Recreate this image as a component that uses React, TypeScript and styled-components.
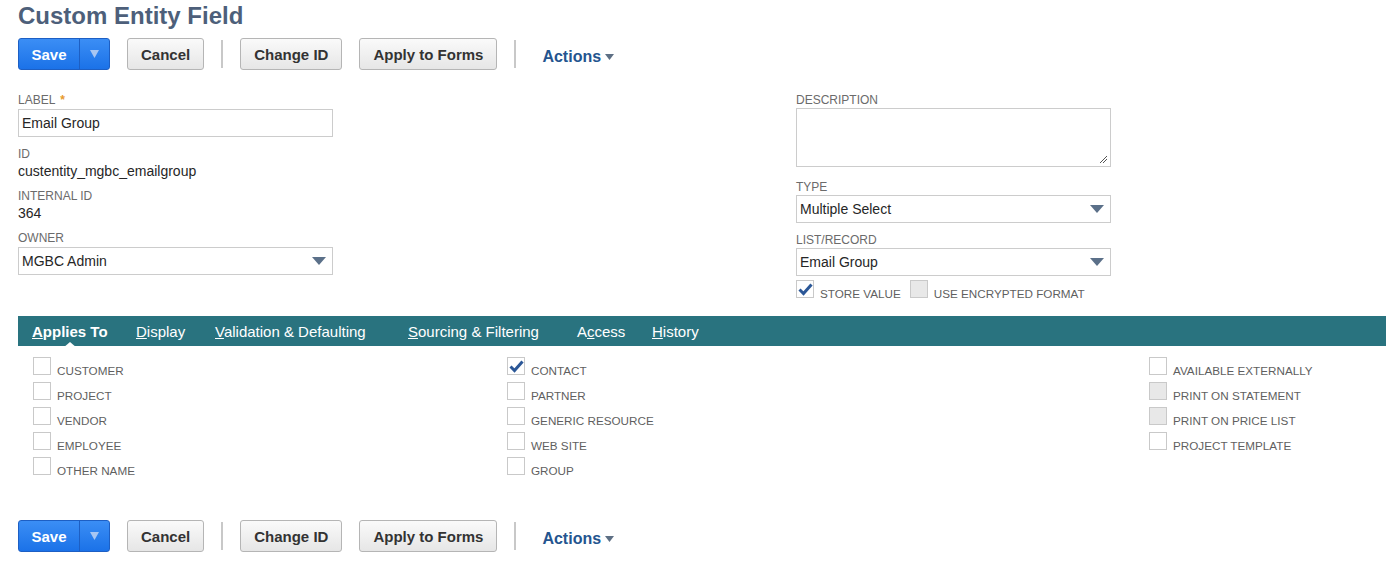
import React from 'react';
import styled, { createGlobalStyle } from 'styled-components';

const GlobalStyle = createGlobalStyle`
  body {
    margin: 0;
    background: #ffffff;
    font-family: "Liberation Sans", Arial, sans-serif;
    color: #262626;
  }
`;

const colors = {
  title: '#4d5f7a',
  label: '#6b6b6b',
  border: '#cccccc',
  tab: '#29737f',
  link: '#24558f',
  check: '#2b5797',
};

// 툴바 (위 / 아래 공통)
function Toolbar() {
  return (
    <Bar>
      <SaveGroup>
        <SaveMain>Save</SaveMain>
        <SaveArrow>
          <svg width="9" height="8" viewBox="0 0 9 8">
            <path d="M0 0 H9 L4.5 8 Z" fill="#a8c6f2" />
          </svg>
        </SaveArrow>
      </SaveGroup>
      <GrayButton>Cancel</GrayButton>
      <Divider />
      <GrayButton>Change ID</GrayButton>
      <GrayButton>Apply to Forms</GrayButton>
      <Divider />
      <ActionsLink>
        Actions
        <svg width="9" height="6" viewBox="0 0 9 6">
          <path d="M0 0 H9 L4.5 6 Z" fill="#5d6f84" />
        </svg>
      </ActionsLink>
    </Bar>
  );
}

function SelectArrow() {
  return (
    <svg width="14" height="8" viewBox="0 0 14 8">
      <path d="M0 0 H14 L7 8 Z" fill="#5b7089" />
    </svg>
  );
}

function CheckMark() {
  return (
    <svg width="15" height="13" viewBox="0 0 15 13">
      <path d="M1.5 6.5 L5.5 10.5 L13.5 1.5" stroke={colors.check} strokeWidth="3" fill="none" />
    </svg>
  );
}

type Box = { label: string; checked?: boolean; disabled?: boolean };

const col1: Box[] = [
  { label: 'CUSTOMER' },
  { label: 'PROJECT' },
  { label: 'VENDOR' },
  { label: 'EMPLOYEE' },
  { label: 'OTHER NAME' },
];
const col2: Box[] = [
  { label: 'CONTACT', checked: true },
  { label: 'PARTNER' },
  { label: 'GENERIC RESOURCE' },
  { label: 'WEB SITE' },
  { label: 'GROUP' },
];
const col3: Box[] = [
  { label: 'AVAILABLE EXTERNALLY' },
  { label: 'PRINT ON STATEMENT', disabled: true },
  { label: 'PRINT ON PRICE LIST', disabled: true },
  { label: 'PROJECT TEMPLATE' },
];

function CheckColumn({ items }: { items: Box[] }) {
  return (
    <Column>
      {items.map((b) => (
        <CheckRow key={b.label}>
          <CheckBox $disabled={b.disabled}>{b.checked && <CheckMark />}</CheckBox>
          <CheckLabel>{b.label}</CheckLabel>
        </CheckRow>
      ))}
    </Column>
  );
}

export default function App() {
  return (
    <>
      <GlobalStyle />
      <Page>
        <Title>Custom Entity Field</Title>
        <Toolbar />

        <FormGrid>
          <FieldColumn>
            <Field>
              <Label>
                LABEL <Required>*</Required>
              </Label>
              <TextInput>Email Group</TextInput>
            </Field>
            <Field $top={10}>
              <Label>ID</Label>
              <Value>custentity_mgbc_emailgroup</Value>
            </Field>
            <Field $top={9}>
              <Label>INTERNAL ID</Label>
              <Value>364</Value>
            </Field>
            <Field $top={9}>
              <Label>OWNER</Label>
              <SelectBox>
                MGBC Admin
                <SelectArrow />
              </SelectBox>
            </Field>
          </FieldColumn>

          <FieldColumn>
            <Field $gap={1}>
              <Label>DESCRIPTION</Label>
              <TextArea>
                <svg width="10" height="10" viewBox="0 0 10 10">
                  <path d="M9 2 L2 9 M9 5 L5 9" stroke="#555" strokeWidth="1" />
                </svg>
              </TextArea>
            </Field>
            <Field $top={13} $gap={1}>
              <Label>TYPE</Label>
              <SelectBox>
                Multiple Select
                <SelectArrow />
              </SelectBox>
            </Field>
            <Field $top={10} $gap={1}>
              <Label>LIST/RECORD</Label>
              <SelectBox>
                Email Group
                <SelectArrow />
              </SelectBox>
            </Field>
            <InlineChecks>
              <CheckRow>
                <CheckBox>
                  <CheckMark />
                </CheckBox>
                <CheckLabel>STORE VALUE</CheckLabel>
              </CheckRow>
              <CheckRow>
                <CheckBox $disabled />
                <CheckLabel>USE ENCRYPTED FORMAT</CheckLabel>
              </CheckRow>
            </InlineChecks>
          </FieldColumn>
        </FormGrid>

        <TabBar>
          <Tab $active $w={75}>
            <u>A</u>pplies To
          </Tab>
          <Tab $w={50}>
            <u>D</u>isplay
          </Tab>
          <Tab $w={164}>
            <u>V</u>alidation &amp; Defaulting
          </Tab>
          <Tab $w={140}>
            <u>S</u>ourcing &amp; Filtering
          </Tab>
          <Tab $w={46}>
            A<u>c</u>cess
          </Tab>
          <Tab $w={50}>
            <u>H</u>istory
          </Tab>
        </TabBar>

        <CheckGrid>
          <CheckColumn items={col1} />
          <CheckColumn items={col2} />
          <CheckColumn items={col3} />
        </CheckGrid>

        <Toolbar />
      </Page>
    </>
  );
}

const Page = styled.div`
  padding: 0 0 0 18px;
  width: 1368px;
`;

const Title = styled.h1`
  margin: 0;
  padding-top: 1px;
  font-size: 24px;
  line-height: 30px;
  font-weight: bold;
  color: ${colors.title};
`;

const Bar = styled.div`
  display: flex;
  align-items: center;
  gap: 17px;
  height: 32px;
  margin-top: 7px;
`;

const SaveGroup = styled.div`
  display: flex;
  height: 30px;
  border: 1px solid #1d5fc4;
  border-radius: 3px;
  background: linear-gradient(#3b8ef5, #1b72e8);
  overflow: hidden;
`;

const SaveMain = styled.div`
  width: 60px;
  display: flex;
  align-items: center;
  justify-content: center;
  color: #ffffff;
  font-weight: bold;
  font-size: 15px;
`;

const SaveArrow = styled.div`
  width: 29px;
  border-left: 1px solid #1d5fc4;
  display: flex;
  align-items: center;
  justify-content: center;
`;

const GrayButton = styled.div`
  height: 30px;
  padding: 0 13px;
  display: flex;
  align-items: center;
  border: 1px solid #b5b5b5;
  border-radius: 3px;
  background: linear-gradient(#fafafa, #e6e6e6);
  font-weight: bold;
  font-size: 15px;
  color: #333333;
`;

const Divider = styled.div`
  width: 2px;
  height: 28px;
  background: #c8c8c8;
`;

const ActionsLink = styled.div`
  display: flex;
  align-items: center;
  gap: 4px;
  margin-left: 9px;
  margin-top: 5px;
  font-size: 16px;
  font-weight: bold;
  color: ${colors.link};
`;

const FormGrid = styled.div`
  display: grid;
  grid-template-columns: 778px 315px;
  margin-top: 23px;
`;

const FieldColumn = styled.div`
  display: flex;
  flex-direction: column;
`;

const Field = styled.div<{ $top?: number; $gap?: number }>`
  display: flex;
  flex-direction: column;
  gap: ${(p) => p.$gap ?? 2}px;
  margin-top: ${(p) => p.$top ?? 0}px;
`;

const Label = styled.div`
  font-size: 12px;
  line-height: 14px;
  color: ${colors.label};
`;

const Required = styled.span`
  color: #e79a2c;
  font-weight: bold;
  margin-left: 2px;
`;

const Value = styled.div`
  font-size: 14px;
  line-height: 17px;
  color: #262626;
`;

const TextInput = styled.div`
  box-sizing: border-box;
  width: 315px;
  height: 28px;
  border: 1px solid ${colors.border};
  padding: 0 3px;
  display: flex;
  align-items: center;
  font-size: 14px;
`;

const SelectBox = styled(TextInput)`
  justify-content: space-between;
  padding-right: 6px;
`;

const TextArea = styled.div`
  box-sizing: border-box;
  width: 315px;
  height: 59px;
  border: 1px solid ${colors.border};
  display: flex;
  align-items: flex-end;
  justify-content: flex-end;
  padding: 0 2px 2px 0;
`;

const InlineChecks = styled.div`
  display: flex;
  gap: 9px;
  margin-top: 4px;
`;

const CheckRow = styled.div`
  display: flex;
  align-items: flex-start;
  gap: 6px;
  height: 25px;
`;

const CheckBox = styled.div<{ $disabled?: boolean }>`
  box-sizing: border-box;
  flex: none;
  width: 18px;
  height: 18px;
  border: 1px solid #c9c9c9;
  background: ${(p) => (p.$disabled ? '#e8e8e8' : '#ffffff')};
  display: flex;
  align-items: center;
  justify-content: center;
`;

const CheckLabel = styled.span`
  font-size: 11.7px;
  line-height: 15px;
  margin-top: 6px;
  white-space: nowrap;
  color: #5f5f5f;
`;

const TabBar = styled.div`
  display: flex;
  align-items: center;
  gap: 29px;
  height: 30px;
  margin-top: 11px;
  padding-left: 14px;
  background: ${colors.tab};
`;

const Tab = styled.div<{ $active?: boolean; $w: number }>`
  position: relative;
  width: ${(p) => p.$w}px;
  white-space: nowrap;
  color: #ffffff;
  font-size: 15px;
  font-weight: ${(p) => (p.$active ? 'bold' : 'normal')};

  ${(p) =>
    p.$active &&
    `
    &::after {
      content: '';
      position: absolute;
      left: 50%;
      bottom: -8px;
      margin-left: -7px;
      border-left: 7px solid transparent;
      border-right: 7px solid transparent;
      border-bottom: 6px solid #ffffff;
    }
  `}
`;

const CheckGrid = styled.div`
  display: grid;
  grid-template-columns: 474px 642px 1fr;
  padding-left: 15px;
  margin-top: 11px;
  height: 156px;
`;

const Column = styled.div`
  display: flex;
  flex-direction: column;
`;
